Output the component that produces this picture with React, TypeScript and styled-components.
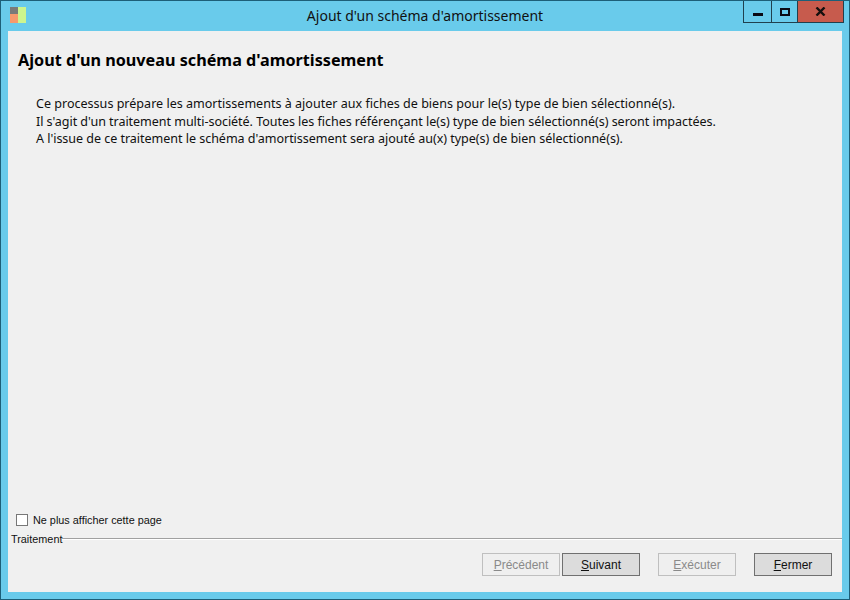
import React from 'react'
import styled, { createGlobalStyle } from 'styled-components'

const GlobalStyle = createGlobalStyle`
  html, body {
    margin: 0;
    padding: 0;
    background: #69cbeb;
  }
  body {
    font-family: "Noto Sans", "DejaVu Sans", sans-serif;
  }
`

const AppIcon = () => (
  <svg width="16" height="16" viewBox="0 0 16 16">
    <rect x="0" y="0" width="8" height="7" fill="#7a7a78" />
    <rect x="0" y="7" width="8" height="9" fill="#f79a6c" />
    <rect x="8" y="0" width="8" height="16" fill="#cdf58e" />
  </svg>
)

const CloseGlyph = () => (
  <svg width="11" height="9" viewBox="0 0 11 9">
    <path d="M1.5 0.5 L9.5 8.5 M9.5 0.5 L1.5 8.5" stroke="#14100e" strokeWidth="2.4" fill="none" />
  </svg>
)

export default function App() {
  return (
    <Frame>
      <GlobalStyle />
      <TitleBar>
        <IconSlot>
          <AppIcon />
        </IconSlot>
        <Title>Ajout d'un schéma d'amortissement</Title>
        <WindowButtons>
          <WinButton $width={27}>
            <MinGlyph />
          </WinButton>
          <WinButton $width={25}>
            <MaxGlyph />
          </WinButton>
          <CloseButton>
            <CloseGlyph />
          </CloseButton>
        </WindowButtons>
      </TitleBar>
      <Client>
        <Content>
          <Heading>Ajout d'un nouveau schéma d'amortissement</Heading>
          <Description>
            <Line>Ce processus prépare les amortissements à ajouter aux fiches de biens pour le(s) type de bien sélectionné(s).</Line>
            <Line $tracking={-0.05}>Il s'agit d'un traitement multi-société. Toutes les fiches référençant le(s) type de bien sélectionné(s) seront impactées.</Line>
            <Line $tracking={-0.04}>A l'issue de ce traitement le schéma d'amortissement sera ajouté au(x) type(s) de bien sélectionné(s).</Line>
          </Description>
        </Content>
        <CheckRow>
          <CheckBox />
          <span>Ne plus afficher cette page</span>
        </CheckRow>
        <GroupHeader>
          <GroupLabel>Traitement</GroupLabel>
          <GroupLine />
        </GroupHeader>
        <Footer>
          <ActionButton disabled><u>P</u>récédent</ActionButton>
          <ActionButton><u>S</u>uivant</ActionButton>
          <SpacedButton disabled><u>E</u>xécuter</SpacedButton>
          <SpacedButton><u>F</u>ermer</SpacedButton>
        </Footer>
      </Client>
    </Frame>
  )
}

const Frame = styled.div`
  width: 850px;
  height: 600px;
  box-sizing: border-box;
  background: #69cbeb;
  border: 1px solid #1d5f78;
  padding: 0 7px 7px 7px;
  display: flex;
  flex-direction: column;
  overflow: hidden;
`
const TitleBar = styled.header`
  height: 30px;
  flex: none;
  display: flex;
  position: relative;
  align-items: flex-start;
`
const IconSlot = styled.div`
  display: flex;
  margin: 6px 0 0 2px;
`
const Title = styled.div`
  position: absolute;
  left: 0;
  right: 0;
  top: 5px;
  text-align: center;
  font-size: 14px;
  line-height: 20px;
  color: #111;
`
const WindowButtons = styled.div`
  position: absolute;
  top: 0;
  right: -2px;
  display: flex;
  height: 21px;
  border: 1px solid #20404e;
  border-top: none;
`
const WinButton = styled.div<{ $width: number }>`
  width: ${p => p.$width}px;
  display: flex;
  align-items: center;
  justify-content: center;
  border-right: 1px solid #20404e;
`
const MinGlyph = styled.div`
  width: 10px;
  height: 3px;
  background: #0a0a14;
  margin-top: 5px;
`
const MaxGlyph = styled.div`
  width: 6px;
  height: 4px;
  border: 2px solid #0a0a14;
`
const CloseButton = styled.div`
  width: 45px;
  background: #c75b4d;
  display: flex;
  align-items: center;
  justify-content: center;
`
const Client = styled.main`
  flex: 1;
  min-height: 0;
  background: #f0f0f0;
  display: flex;
  flex-direction: column;
`
const Content = styled.section`
  flex: 1;
  padding: 18px 10px 0;
`
const Heading = styled.h1`
  margin: 0;
  font-size: 16.2px;
  line-height: 22px;
  font-weight: 700;
  color: #000;
`
const Description = styled.div`
  margin: 24px 0 0 18px;
  font-size: 12.55px;
  line-height: 17.5px;
  color: #111;
`
const Line = styled.p<{ $tracking?: number }>`
  margin: 0;
  letter-spacing: ${p => p.$tracking ?? 0}px;
`
const CheckRow = styled.label`
  display: flex;
  align-items: center;
  gap: 5px;
  margin-left: 8px;
  height: 16px;
  margin-bottom: 1px;
  font-family: "Liberation Sans", Arial, sans-serif;
  font-size: 10.85px;
  color: #111;
`
const CheckBox = styled.span`
  width: 10px;
  height: 10px;
  background: #fff;
  border: 1px solid #777;
`
const GroupHeader = styled.div`
  display: flex;
  align-items: center;
  margin: 3px 0 0 3px;
  height: 14px;
  font-family: "Liberation Sans", Arial, sans-serif;
  font-size: 10.85px;
  color: #111;
`
const GroupLabel = styled.span`
  margin-top: -1px;
`
const GroupLine = styled.div`
  flex: 1;
  height: 1px;
  background: #a0a0a0;
  box-shadow: 0 1px 0 #fff;
  margin-bottom: 1px;
`
const Footer = styled.footer`
  display: flex;
  justify-content: flex-end;
  gap: 2px;
  padding: 7px 10px 16px 0;
`
const ActionButton = styled.button`
  width: 78px;
  height: 23px;
  padding: 0;
  box-sizing: border-box;
  font-family: "Liberation Sans", Arial, sans-serif;
  font-size: 12px;
  color: #111;
  background: #dcdcdc;
  border: 1px solid #707070;
  &:disabled {
    color: #8a8a8a;
    background: #efefef;
    border-color: #bfbfbf;
  }
`
const SpacedButton = styled(ActionButton)`
  margin-left: 16px;
`
